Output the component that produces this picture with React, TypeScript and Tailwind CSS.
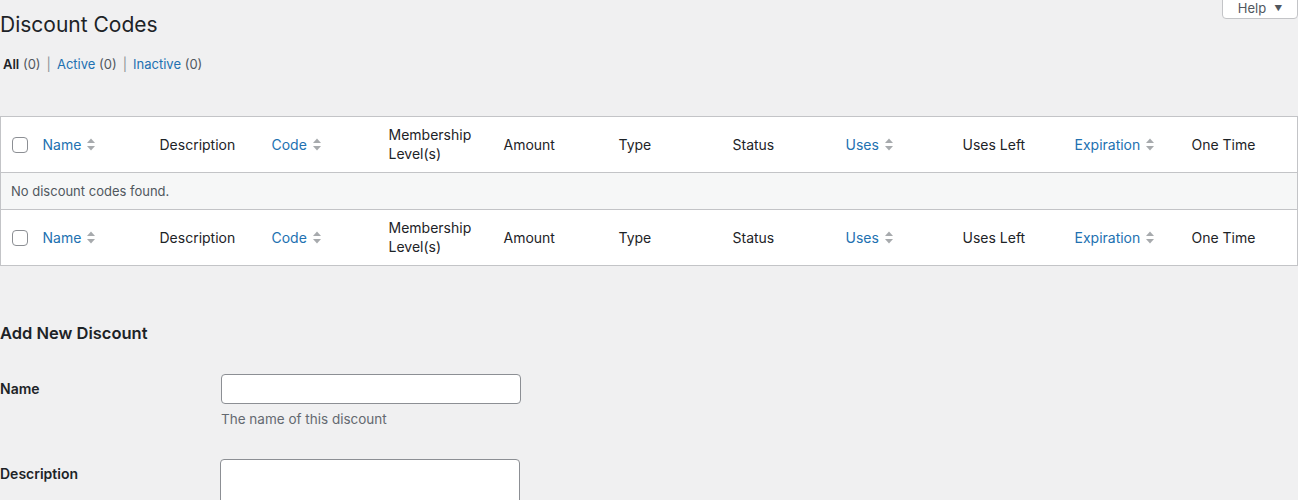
import React from "react";

const cols = [
  { label: "Name", sort: true, w: 117 },
  { label: "Description", w: 112 },
  { label: "Code", sort: true, w: 117 },
  { label: "Membership Level(s)", w: 115, wrap: true },
  { label: "Amount", w: 115 },
  { label: "Type", w: 114 },
  { label: "Status", w: 113 },
  { label: "Uses", sort: true, w: 117 },
  { label: "Uses Left", w: 112 },
  { label: "Expiration", sort: true, w: 117 },
  { label: "One Time" },
];

const SortIcon = () => (
  <svg width="10" height="15" viewBox="0 0 10 15" className="ml-[5px] shrink-0">
    <path d="M1 6 L5 1.5 L9 6 Z" fill="#a7aaad" />
    <path d="M1 9 L5 13.5 L9 9 Z" fill="#a7aaad" />
  </svg>
);

const HeaderRow = ({ top }: { top?: boolean }) => (
  <tr className={top ? "border-b border-[#c3c4c7]" : "border-t border-[#c3c4c7]"}>
    <td className="h-[56px] w-[32px] pl-[11px] align-middle">
      <span className="block h-4 w-4 rounded-[4px] border border-[#8c8f94] bg-white" />
    </td>
    {cols.map((c) => (
      <th
        key={c.label}
        style={c.w ? { width: c.w } : undefined}
        className="px-[10px] text-left align-middle font-normal"
      >
        {c.sort ? (
          <span className="flex items-center text-[#2271b1]">
            {c.label}
            <SortIcon />
          </span>
        ) : c.wrap ? (
          <span className="-mt-[2px] block leading-[19px]">
            Membership
            <br />
            Level(s)
          </span>
        ) : (
          c.label
        )}
      </th>
    ))}
  </tr>
);

export default function App() {
  return (
    <div
      className="min-h-[500px] overflow-hidden bg-[#f0f0f1] text-[#1d2327]"
      style={{ fontFamily: "Inter, 'Noto Sans', sans-serif" }}
    >
      {/* Help tab */}
      <div className="relative">
        <button className="absolute right-0 top-[-6px] flex h-[25px] w-[76px] items-start justify-center gap-[8px] rounded-b-[4px] border border-[#c3c4c7] bg-white pt-[4px] text-[13px] text-[#50575e]">
          Help
          <span className="mt-[3px] text-[8px]">▼</span>
        </button>
      </div>

      <h1 className="pt-[10px] text-[21px] leading-[30px] font-normal">Discount Codes</h1>

      <ul className="mt-[14px] flex items-center text-[13px] leading-[20px] text-[#50575e]">
        <li className="pl-[3px]">
          <span className="font-semibold text-[#1d2327]">All</span> (0)
          <span className="px-[6px] text-[#8c8f94]">|</span>
        </li>
        <li>
          <span className="text-[#2271b1]">Active</span> (0)
          <span className="px-[6px] text-[#8c8f94]">|</span>
        </li>
        <li>
          <span className="text-[#2271b1]">Inactive</span> (0)
        </li>
      </ul>

      <table className="mt-[42px] w-[1298px] table-fixed border-collapse border border-[#c3c4c7] bg-white text-[14px]">
        <thead>
          <HeaderRow top />
        </thead>
        <tbody>
          <tr className="bg-[#f6f7f7]">
            <td colSpan={12} className="h-[37px] px-[10px] pt-[2px] text-[13px] text-[#50575e]">
              No discount codes found.
            </td>
          </tr>
        </tbody>
        <tfoot>
          <HeaderRow />
        </tfoot>
      </table>

      <h3 className="mt-[56px] text-[16.5px] leading-[22px] font-semibold">Add New Discount</h3>

      <div className="mt-[30px] grid grid-cols-[221px_300px] gap-y-[30px] text-[14px]">
        <div className="pt-[4px] font-semibold">Name</div>
        <div>
          <input className="block h-[30px] w-[300px] rounded-[4px] border border-[#8c8f94] bg-white" />
          <p className="mt-[6px] text-[13.5px] leading-[19px] text-[#646970]">The name of this discount</p>
        </div>
        <div className="pt-[4px] font-semibold">Description</div>
        <div>
          <textarea className="-ml-px block h-[60px] w-[300px] rounded-[4px] border border-[#8c8f94] bg-white" />
        </div>
      </div>
    </div>
  );
}
